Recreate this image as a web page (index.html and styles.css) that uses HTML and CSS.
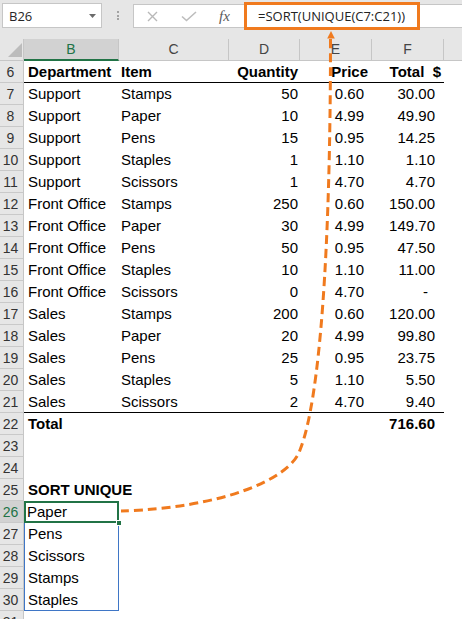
FILE: index.html
```html
<!DOCTYPE html>
<html>
<head>
<meta charset="utf-8">
<link rel="stylesheet" href="styles.css">
</head>
<body>
<div class="topbar">
  <div class="namebox"><span>B26</span><svg class="dd" width="7" height="4" viewBox="0 0 7 4"><polygon points="0,0 7,0 3.5,4" fill="#6b6b6b"/></svg></div>
  <div class="dots"><i></i><i></i><i></i></div>
  <div class="fxbox">
    <svg class="ic-x" width="11" height="11" viewBox="0 0 11 11"><path d="M1 1 L10 10 M10 1 L1 10" stroke="#b8b8b8" stroke-width="1.4" fill="none"/></svg>
    <svg class="ic-ok" width="16" height="11" viewBox="0 0 16 11"><path d="M1 5.5 L5.5 9.5 L15 1" stroke="#bdbdbd" stroke-width="1.6" fill="none"/></svg>
    <span class="fx">fx</span>
  </div>
  <div class="formula">=SORT(UNIQUE(C7:C21))</div>
  <div class="fill"></div>
</div>

<div class="sheet">
  <div class="row head">
    <div class="hdr corner"><svg width="23" height="21" viewBox="0 0 23 21"><polygon points="22,4 22,18 8,18" fill="#bcbcbc"/></svg></div>
    <div class="hdr sel">B</div><div class="hdr">C</div><div class="hdr">D</div><div class="hdr">E</div><div class="hdr">F</div><div class="hdr last"></div>
  </div>
  <div class="row"><div class="rh">6</div><div class="b bold ul">Department</div><div class="it bold ul">Item</div><div class="q bold ul">Quantity</div><div class="p ph bold ul">Price</div><div class="t th bold ul">Total  $</div><div></div></div>
  <div class="row"><div class="rh">7</div><div class="b">Support</div><div class="it">Stamps</div><div class="q">50</div><div class="p">0.60</div><div class="t">30.00</div><div></div></div>
  <div class="row"><div class="rh">8</div><div class="b">Support</div><div class="it">Paper</div><div class="q">10</div><div class="p">4.99</div><div class="t">49.90</div><div></div></div>
  <div class="row"><div class="rh">9</div><div class="b">Support</div><div class="it">Pens</div><div class="q">15</div><div class="p">0.95</div><div class="t">14.25</div><div></div></div>
  <div class="row"><div class="rh">10</div><div class="b">Support</div><div class="it">Staples</div><div class="q">1</div><div class="p">1.10</div><div class="t">1.10</div><div></div></div>
  <div class="row"><div class="rh">11</div><div class="b">Support</div><div class="it">Scissors</div><div class="q">1</div><div class="p">4.70</div><div class="t">4.70</div><div></div></div>
  <div class="row"><div class="rh">12</div><div class="b">Front Office</div><div class="it">Stamps</div><div class="q">250</div><div class="p">0.60</div><div class="t">150.00</div><div></div></div>
  <div class="row"><div class="rh">13</div><div class="b">Front Office</div><div class="it">Paper</div><div class="q">30</div><div class="p">4.99</div><div class="t">149.70</div><div></div></div>
  <div class="row"><div class="rh">14</div><div class="b">Front Office</div><div class="it">Pens</div><div class="q">50</div><div class="p">0.95</div><div class="t">47.50</div><div></div></div>
  <div class="row"><div class="rh">15</div><div class="b">Front Office</div><div class="it">Staples</div><div class="q">10</div><div class="p">1.10</div><div class="t">11.00</div><div></div></div>
  <div class="row"><div class="rh">16</div><div class="b">Front Office</div><div class="it">Scissors</div><div class="q">0</div><div class="p">4.70</div><div class="t dash">-</div><div></div></div>
  <div class="row"><div class="rh">17</div><div class="b">Sales</div><div class="it">Stamps</div><div class="q">200</div><div class="p">0.60</div><div class="t">120.00</div><div></div></div>
  <div class="row"><div class="rh">18</div><div class="b">Sales</div><div class="it">Paper</div><div class="q">20</div><div class="p">4.99</div><div class="t">99.80</div><div></div></div>
  <div class="row"><div class="rh">19</div><div class="b">Sales</div><div class="it">Pens</div><div class="q">25</div><div class="p">0.95</div><div class="t">23.75</div><div></div></div>
  <div class="row"><div class="rh">20</div><div class="b">Sales</div><div class="it">Staples</div><div class="q">5</div><div class="p">1.10</div><div class="t">5.50</div><div></div></div>
  <div class="row"><div class="rh">21</div><div class="b ul">Sales</div><div class="it ul">Scissors</div><div class="q ul">2</div><div class="p ul">4.70</div><div class="t ul">9.40</div><div></div></div>
  <div class="row"><div class="rh">22</div><div class="b bold">Total</div><div></div><div></div><div></div><div class="t bold">716.60</div><div></div></div>
  <div class="row"><div class="rh">23</div><div></div><div></div><div></div><div></div><div></div><div></div></div>
  <div class="row"><div class="rh">24</div><div></div><div></div><div></div><div></div><div></div><div></div></div>
  <div class="row"><div class="rh">25</div><div class="b bold">SORT UNIQUE</div><div></div><div></div><div></div><div></div><div></div></div>
  <div class="row"><div class="rh sel">26</div><div class="b active">Paper<span class="handle"></span></div><div></div><div></div><div></div><div></div><div></div></div>
  <div class="row"><div class="rh">27</div><div class="b spill">Pens</div><div></div><div></div><div></div><div></div><div></div></div>
  <div class="row"><div class="rh">28</div><div class="b spill">Scissors</div><div></div><div></div><div></div><div></div><div></div></div>
  <div class="row"><div class="rh">29</div><div class="b spill">Stamps</div><div></div><div></div><div></div><div></div><div></div></div>
  <div class="row"><div class="rh">30</div><div class="b spill end">Staples</div><div></div><div></div><div></div><div></div><div></div></div>
  <div class="row"><div class="rh">31</div><div></div><div></div><div></div><div></div><div></div><div></div></div>
</div>

<svg class="overlay" width="462" height="619" viewBox="0 0 462 619">
  <path d="M330.5 39 C330.5 250 320 400 300 450 C290 480 220 508 121 511" fill="none" stroke="#f07a1e" stroke-width="3" stroke-dasharray="9 5"/>
  <polygon points="331,31 327.2,38.5 334.8,38.5" fill="#f07a1e"/>
</svg>
</body>
</html>
```

FILE: styles.css
```css
html, body {
  margin: 0;
  padding: 0;
}
body {
  width: 462px;
  height: 619px;
  overflow: hidden;
  position: relative;
  background: #ffffff;
  font-family: "Liberation Sans", Arial, sans-serif;
  color: #000;
}

/* formula bar */
.topbar {
  display: flex;
  align-items: flex-start;
  height: 39px;
  background: #e6e6e6;
}
.namebox {
  margin: 3px 0 0 2px;
  width: 100px;
  height: 25px;
  box-sizing: border-box;
  border: 1px solid #c6c6c6;
  background: #fff;
  display: flex;
  align-items: center;
  justify-content: space-between;
  padding: 0 5px 0 6px;
  font-family: "Open Sans", sans-serif;
  font-size: 13px;
  color: #262626;
}
.dots {
  width: 31px;
  margin-top: 11px;
  display: flex;
  flex-direction: column;
  align-items: center;
  gap: 1.5px;
}
.dots i {
  display: block;
  width: 2px;
  height: 2px;
  background: #a3a3a3;
}
.fxbox {
  margin-top: 4px;
  width: 111px;
  height: 24px;
  box-sizing: border-box;
  border: 1px solid #c6c6c6;
  border-right: none;
  background: #fff;
  display: flex;
  align-items: center;
  padding-left: 13px;
}
.ic-x { margin-top: 1px; }
.ic-ok { margin-left: 23px; margin-top: 1px; }
.fx {
  margin-left: 22px;
  font-family: "Liberation Serif", serif;
  font-style: italic;
  font-size: 15px;
  color: #5a5a5a;
}
.formula {
  margin-top: 2px;
  width: 176px;
  height: 28px;
  box-sizing: border-box;
  border: 3px solid #f07a1e;
  background: #fff;
  padding-left: 11px;
  font-family: "Open Sans", sans-serif;
  font-size: 13px;
  line-height: 22px;
  color: #222;
  white-space: nowrap;
}
.fill {
  flex: 1;
  margin-top: 4px;
  height: 24px;
  box-sizing: border-box;
  border-top: 1px solid #c6c6c6;
  border-bottom: 1px solid #c6c6c6;
  background: #fff;
}

/* sheet */
.row {
  display: grid;
  grid-template-columns: 24px 95px 110px 71px 72px 72px 1fr;
  height: 22px;
  line-height: 22px;
  font-size: 15px;
}
.row > div {
  box-sizing: border-box;
  height: 22px;
  white-space: nowrap;
}
.hdr {
  background: #e6e6e6;
  border-right: 1px solid #c6c6c6;
  border-bottom: 1px solid #c6c6c6;
  text-align: center;
  font-size: 14px;
  line-height: 21px;
  color: #444;
}
.hdr.corner svg { display: block; }
.hdr.last { border-right: none; }
.hdr.sel {
  background: #d2d2d2;
  color: #217346;
  border-bottom: 2px solid #217346;
}
.rh {
  background: #e6e6e6;
  border-right: 1px solid #c6c6c6;
  border-bottom: 1px solid #c9c9c9;
  text-align: center;
  padding-right: 2px;
  font-size: 14px;
  color: #333;
}
.rh.sel {
  background: #d2d2d2;
  color: #217346;
}
.b { padding-left: 4px; }
.it { padding-left: 2px; }
.q { text-align: right; padding-right: 2px; }
.p { text-align: right; padding-right: 8px; }
.p.ph { padding-right: 4px; }
.t { text-align: right; padding-right: 9px; }
.t.th { padding-right: 3px; white-space: pre; }
.t.dash { padding-right: 16px; }
.bold { font-weight: bold; }
.ul { border-bottom: 1px solid #000; }

.active {
  position: relative;
  padding-left: 3px;
  box-shadow: inset 0 0 0 2px #217346;
}
.handle {
  position: absolute;
  right: -3px;
  bottom: -3px;
  width: 4px;
  height: 4px;
  background: #217346;
  border: 1px solid #fff;
}
.spill {
  box-shadow: inset 1px 0 0 #3f76c6, inset -1px 0 0 #3f76c6;
}
.spill.end {
  box-shadow: inset 1px 0 0 #3f76c6, inset -1px 0 0 #3f76c6, inset 0 -1px 0 #3f76c6;
}

.overlay {
  position: absolute;
  left: 0;
  top: 0;
  pointer-events: none;
}
```
